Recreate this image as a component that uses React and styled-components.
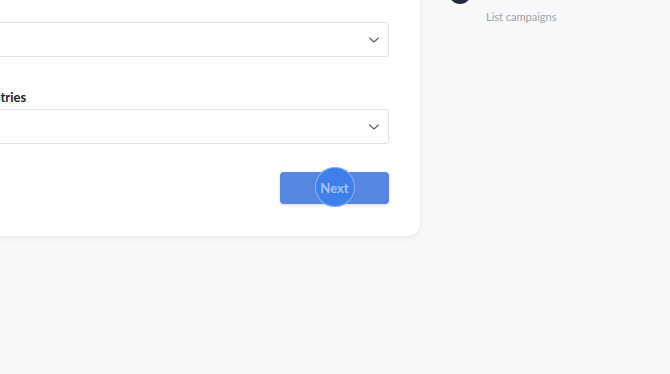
import React from 'react';
import styled, {createGlobalStyle} from 'styled-components';

const GlobalStyle = createGlobalStyle`
  html, body {
    margin: 0;
    padding: 0;
    background: #f7f8fa;
    overflow: hidden;
  }
  body {
    font-family: Lato, "Open Sans", sans-serif;
  }
`;

const Page = styled.div`
  display: flex;
  width: 670px;
  height: 374px;
  overflow: hidden;
`;

const Main = styled.div`
  width: 420px;
  flex-shrink: 0;
`;

const Card = styled.div`
  margin-left: -61px;
  margin-top: -14px;
  padding: 36px 31px 32px 31px;
  background: #fff;
  border-radius: 12px;
  box-shadow: 0 2px 6px rgba(30, 40, 60, 0.07), 0 0 1px rgba(30, 40, 60, 0.08);
  display: flex;
  flex-direction: column;
  gap: 32px;
`;

const Field = styled.div`
  display: flex;
  flex-direction: column;
  gap: 4px;
`;

const Label = styled.label`
  font-size: 13px;
  line-height: 16px;
  font-weight: 700;
  color: #22262c;
`;

const Select = styled.div`
  height: 33px;
  border: 1px solid #dfe1e5;
  border-radius: 3px;
  display: flex;
  align-items: center;
  justify-content: flex-end;
  padding-right: 8px;
`;

const Actions = styled.div`
  display: flex;
  justify-content: flex-end;
  margin-top: -4px;
`;

const Button = styled.button`
  position: relative;
  width: 109px;
  height: 32px;
  border: none;
  border-radius: 4px;
  background: #5686e1;
  color: #a8c3f3;
  font-family: Lato, sans-serif;
  font-weight: 700;
  font-size: 13px;
  cursor: pointer;
  box-shadow: 0 1px 3px rgba(60, 100, 200, 0.25);
`;

const ButtonText = styled.span`
  position: relative;
  z-index: 1;
`;

const ClickRing = styled.span`
  position: absolute;
  left: 50%;
  top: 50%;
  width: 40px;
  height: 40px;
  margin: -21px 0 0 -20px;
  border-radius: 50%;
  background: #3f7fea;
  box-shadow: 0 0 0 1px rgba(170, 200, 250, 0.7) inset;
`;

const Sidebar = styled.div`
  padding-left: 29px;
`;

const StepRow = styled.div`
  display: flex;
  align-items: center;
  gap: 15px;
  margin-top: -18px;
`;

const StepDot = styled.span`
  width: 22px;
  height: 22px;
  border-radius: 50%;
  background: #232b3a;
  flex-shrink: 0;
`;

const SubStep = styled.div`
  padding-left: 37px;
  margin-top: 6px;
  font-family: Lato, sans-serif;
  font-size: 11px;
  line-height: 14px;
  color: #9ca1a9;
`;

function Chevron() {
  return (
    <svg width="12" height="8" viewBox="0 0 12 8" fill="none">
      <path d="M1.5 2 L6 6 L10.5 2" stroke="#5c6168" strokeWidth="1.1" strokeLinecap="round" strokeLinejoin="round" />
    </svg>
  );
}

export default function App() {
  return (
    <Page>
      <GlobalStyle />
      <Main>
        <Card>
          <Field>
            <Select><Chevron /></Select>
          </Field>
          <Field>
            <Label>Countries</Label>
            <Select><Chevron /></Select>
          </Field>
          <Actions>
            <Button>
              <ClickRing />
              <ButtonText>Next</ButtonText>
            </Button>
          </Actions>
        </Card>
      </Main>
      <Sidebar>
        <StepRow>
          <StepDot />
        </StepRow>
        <SubStep>List campaigns</SubStep>
      </Sidebar>
    </Page>
  );
}
